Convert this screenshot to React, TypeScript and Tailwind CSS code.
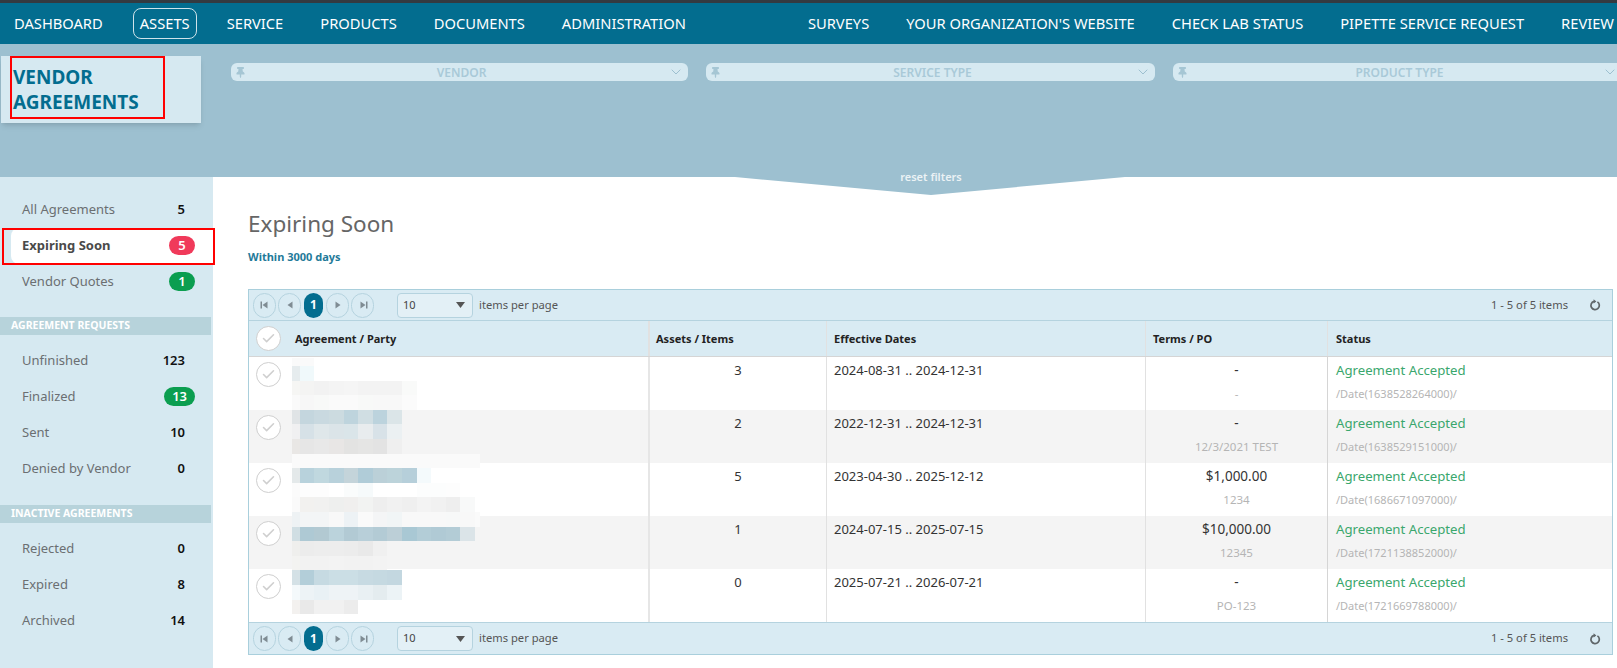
import { Check, ChevronDown } from "lucide-react";
import { FaThumbtack } from "react-icons/fa";

const navLeft = ["DASHBOARD", "ASSETS", "SERVICE", "PRODUCTS", "DOCUMENTS", "ADMINISTRATION"];
const navRight = ["SURVEYS", "YOUR ORGANIZATION'S WEBSITE", "CHECK LAB STATUS", "PIPETTE SERVICE REQUEST", "REVIEW"];

const rows = [
  { items: "3", from: "2024-08-31 .. 2024-12-31", terms: "-", po: "-", date: "/Date(1638528264000)/" },
  { items: "2", from: "2022-12-31 .. 2024-12-31", terms: "-", po: "12/3/2021 TEST", date: "/Date(1638529151000)/" },
  { items: "5", from: "2023-04-30 .. 2025-12-12", terms: "$1,000.00", po: "1234", date: "/Date(1686671097000)/" },
  { items: "1", from: "2024-07-15 .. 2025-07-15", terms: "$10,000.00", po: "12345", date: "/Date(1721138852000)/" },
  { items: "0", from: "2025-07-21 .. 2026-07-21", terms: "-", po: "PO-123", date: "/Date(1721669788000)/" },
];

// redacted names in the first column, one line per row of blocks
const mosaic: { y: number; c: string[] }[] = [
  { y: 0, c: ["fafafa", "fafafa"] },
  { y: 8, c: ["e6ecee", "f0f9fb"] },
  { y: 22.6, c: ["f6f6f4", "f4f4f3", "f2f2f2", "f4f4f4", "f5f5f5", "f3f3f3", "f3f3f3", "f3f3f3", "f9faf9"] },
  { y: 37.2, c: ["fafafa", "f7f7f7", "f8f9f8", "fafafa", "fafafa", "f8f9f8", "f8f8f8", "f8f8f8", "fbfbfb"] },
  { y: 51.8, c: ["e0e4e6", "c4d6de", "c9d9e0", "ccdbe0", "bed4dd", "d0dee3", "bcd3dd", "dbe5e8"] },
  { y: 66.4, c: ["f0f0f1", "d6e1e7", "dfe7ea", "dbe4e8", "dae5e9", "e8ecee", "d8e2e8", "ebf0f2"] },
  { y: 81, c: ["e9e7e5", "e6e6e6", "e8e8e8", "e8e6e5", "e3e3e2", "e5e5e4", "e3e3e3", "efefef"] },
  { y: 95.6, c: ["fafafa", "fafafa", "fafafa", "fafafa", "fafafa", "fafafa", "fafafa", "fafafa", "fafafa", "fafafa", "fafafa", "fafafa", "fafafa", "fafafa"] },
  { y: 110.2, c: ["e4e9ea", "b8d2dc", "c0d8df", "b8d1db", "c4d4da", "b0ccd8", "bbd0d8", "bcd3da", "b6cfda", "f4fafc"] },
  { y: 124.8, c: ["fbfbfb", "fdfdfd", "fdfdfd", "ffffff", "fafcfc", "f6fafb", "ffffff", "ffffff", "ffffff", "fcfdfd", "fcfdfd", "fdfdfd"] },
  { y: 139.4, c: ["fafafa", "f2f1ef", "f1f1f0", "eeefee", "f0efee", "f2f3f2", "eeeeee", "f1f1f1", "efefef", "f3f3f3", "f1f1f1", "eeeeee", "f8f9f9"] },
  { y: 154, c: ["eef2f4", "f3f5f6", "f3f5f6", "f8f8f8", "edf2f5", "fafafa", "f4f5f6", "f1f5f6", "f8f8f8", "f8f8f8", "f8f8f8", "f7f8f8", "f8f8f8", "fafafa"] },
  { y: 168.6, c: ["d0dee3", "aec9d4", "b2c9d2", "bbd3dc", "b2cad4", "b8cfd9", "b3cbd5", "bccfd7", "a9c8d4", "b3cdd7", "b0cad5", "b3ccd6", "dbe4e8"] },
  { y: 183.2, c: ["efefed", "ececec", "ededed", "ededed", "ececec", "e9e9e9", "f0f0f0"] },
  { y: 197.8, c: ["f3f3f1", "f2f2f2", "f2f2f2", "f3f3f3", "f2f2f2", "f2f2f2", "f3f3f3"] },
  { y: 212.4, c: ["d4e1e6", "b3ced9", "c6dae2", "cbdee5", "cbdee5", "c7dae2", "c5d9e1", "c3d7e0"] },
  { y: 227, c: ["f4f9fb", "edf3f6", "e9f1f5", "eef3f6", "eef3f6", "e9f0f3", "e4ecef", "ecf3f6"] },
  { y: 241.6, c: ["f3f1ef", "e9e9e9", "f1f1f1", "f1f1f1", "ececec"] },
];

function Mosaic() {
  return (
    <svg width="188" height="256" className="absolute left-[43px] top-[68px]" shapeRendering="crispEdges">
      {mosaic.map((line) =>
        line.c.map((fill, i) => (
          <rect
            key={`${line.y}-${i}`}
            x={i === 0 ? 0 : 7.7 + (i - 1) * 14.6}
            y={line.y}
            width={i === 0 ? 7.7 : 14.6}
            height={14.6}
            fill={`#${fill}`}
          />
        ))
      )}
    </svg>
  );
}

function SideRow(props: { label: string; count: string; badge?: "red" | "green"; active?: boolean }) {
  return (
    <div
      className={
        "relative flex h-[35.75px] items-center justify-between ml-[11px] pl-[11px] rounded-l-lg text-[13px] " +
        (props.active ? "bg-white font-bold text-[#4a4a4a]" : "text-[#6b6f72]")
      }
    >
      <span>{props.label}</span>
      {props.badge ? (
        <span
          className={
            "mr-[18px] flex h-[19px] min-w-[26px] items-center justify-center rounded-full px-2 text-[13px] font-semibold text-white " +
            (props.badge === "red" ? "bg-[#f03a5a]" : "bg-[#0b9e50]")
          }
        >
          {props.count}
        </span>
      ) : (
        <span className="mr-[28px] font-semibold text-[#111]">{props.count}</span>
      )}
      {props.active && <div className="absolute left-[-9px] right-[-2px] top-0 bottom-[-1px] border-2 border-[#f00]" />}
    </div>
  );
}

function SideHeader(props: { label: string; className: string }) {
  return (
    <div className={"flex h-[18px] w-[211px] items-center bg-[#b7d3db] pl-[11px] text-[10.5px] font-bold text-white " + props.className}>
      {props.label}
    </div>
  );
}

function FilterSelect(props: { label: string; className: string }) {
  return (
    <div className={"flex h-[18px] shrink-0 items-center justify-between rounded-md bg-[#d6e9f1] px-[4px] " + props.className}>
      <FaThumbtack size={11} className="text-[#a5c6d4]" />
      <span className="ml-[9px] mt-[2px] text-[12px] font-semibold text-[#a9c9d8]">{props.label}</span>
      <ChevronDown size={16} strokeWidth={1.5} className="text-[#9dc0d0]" />
    </div>
  );
}

function CheckCircle() {
  return (
    <div className="flex h-[25px] w-[25px] items-center justify-center rounded-full border border-[#cfcfcf] bg-white">
      <Check size={15} strokeWidth={2.5} className="text-[#cfcfcf]" />
    </div>
  );
}

function PageButton(props: { bar?: "left" | "right"; dir: "left" | "right" }) {
  return (
    <div className="flex h-[25px] w-[23px] items-center justify-center rounded-full border border-[#b5d3df]">
      <svg width="10" height="10" viewBox="0 0 10 10" className="fill-[#7f8c93]">
        {props.dir === "left" ? <path d="M7.5 1.5v7L2.5 5z" /> : <path d="M2.5 1.5v7L7.5 5z" />}
        {props.bar === "left" && <rect x="0.5" y="1.5" width="1.5" height="7" />}
        {props.bar === "right" && <rect x="8" y="1.5" width="1.5" height="7" />}
      </svg>
    </div>
  );
}

function RefreshIcon() {
  return (
    <svg width="12" height="12" viewBox="0 0 12 12" className="ml-[21px]">
      <path d="M8.4 2.9A4.2 4.2 0 1 1 5 2.4" fill="none" stroke="#5f6669" strokeWidth="1.7" />
      <path d="M4.6 0.2L7.4 2.4 4.6 4.6z" fill="#5f6669" />
    </svg>
  );
}

function Pager(props: { className: string }) {
  return (
    <div className={"flex items-center bg-[#d9ebf3] pl-1 pr-[11px] text-[11.2px] text-[#555] " + props.className}>
      <div className="flex items-center gap-[2px]">
        <PageButton dir="left" bar="left" />
        <PageButton dir="left" />
        <div className="mx-[1px] flex h-[25px] w-[19px] items-center justify-center rounded-full bg-[#036d8f] text-[12px] font-bold text-white">1</div>
        <PageButton dir="right" />
        <PageButton dir="right" bar="right" />
      </div>
      <div className="ml-[23px] flex h-[25px] w-[76px] items-center justify-between rounded border border-[#b5d3df] bg-[#e3f0f6] pl-[5px] pr-[7px] text-[11px] text-[#444]">
        <span>10</span>
        <svg width="9" height="6" viewBox="0 0 9 6" className="fill-[#555]"><path d="M0 0h9L4.5 6z" /></svg>
      </div>
      <span className="ml-[6px]">items per page</span>
      <span className="ml-auto">1 - 5 of 5 items</span>
      <RefreshIcon />
    </div>
  );
}

export default function App() {
  return (
    <div className="flex h-[668px] w-[1617px] flex-col overflow-hidden bg-white font-['Noto_Sans',sans-serif] text-[13px]">
      <div className="h-[3px] shrink-0 bg-[#343a40]" />

      <nav className="flex h-[41px] shrink-0 items-center justify-between overflow-hidden whitespace-nowrap bg-[#036d8f] pl-[14px] text-[14.7px] text-white">
        <div className="flex items-center gap-[37px]">
          {navLeft.map((n) => (
            <span key={n} className={n === "ASSETS" ? "-mx-[7px] rounded-lg border border-[#cfe3ea] px-[6px] py-[3px]" : ""}>{n}</span>
          ))}
        </div>
        <div className="flex shrink-0 items-center gap-[37px] pr-[3px]">
          {navRight.map((n) => (
            <span key={n}>{n}</span>
          ))}
        </div>
      </nav>

      <div className="relative z-10 flex h-[133px] shrink-0 bg-[#9dc0d0]">
        <div className="relative mt-[12px] ml-[1px] h-[67px] w-[200px] shrink-0 bg-[#d6e9f1] pl-[12px] pt-[9px] text-[19px] font-bold leading-[25px] text-[#036d8f] shadow-md">
          VENDOR<br />AGREEMENTS
          <div className="absolute left-[9px] top-0 h-[63px] w-[155px] border-2 border-[#f00]" />
        </div>
        <div className="ml-[30px] mt-[19px] flex items-start gap-[18px]">
          <FilterSelect label="VENDOR" className="w-[457px]" />
          <FilterSelect label="SERVICE TYPE" className="w-[449px]" />
          <FilterSelect label="PRODUCT TYPE" className="w-[449px]" />
        </div>
        <svg width="390" height="18" viewBox="0 0 390 18" className="absolute left-[735px] top-[133px] fill-[#9dc0d0]">
          <path d="M0 0H390L196 18z" />
        </svg>
        <span className="absolute left-[931px] top-[125px] -translate-x-1/2 text-[11px] font-semibold text-white opacity-80">reset filters</span>
      </div>

      <div className="flex min-h-0 flex-1">
        <aside className="w-[213px] shrink-0 bg-[#d6e9f1] pt-[15px]">
          <SideRow label="All Agreements" count="5" />
          <SideRow label="Expiring Soon" count="5" badge="red" active />
          <SideRow label="Vendor Quotes" count="1" badge="green" />
          <SideHeader label="AGREEMENT REQUESTS" className="mt-[18px] mb-[8px]" />
          <SideRow label="Unfinished" count="123" />
          <SideRow label="Finalized" count="13" badge="green" />
          <SideRow label="Sent" count="10" />
          <SideRow label="Denied by Vendor" count="0" />
          <SideHeader label="INACTIVE AGREEMENTS" className="mt-[19px] mb-[8px]" />
          <SideRow label="Rejected" count="0" />
          <SideRow label="Expired" count="8" />
          <SideRow label="Archived" count="14" />
        </aside>

        <main className="min-w-0 flex-1 pl-[35px] pr-[4px] pt-[29px]">
          <h1 className="h-[36px] text-[22.5px] leading-[36px] text-[#666]">Expiring Soon</h1>
          <p className="mt-[7px] h-[16px] text-[11px] font-bold leading-[16px] text-[#1f7a99]">Within 3000 days</p>

          <div className="relative mt-[24px] border border-[#a9cfdc]">
            <Pager className="h-[31px] border-b border-[#b5d3df]" />
            <div className="grid h-[36px] grid-cols-[401px_177px_319px_182px_1fr] items-center border-b border-[#d5d5d5] bg-[#d9ebf3] text-[11px] font-bold text-[#222]">
              <div className="flex h-full items-center border-r-2 border-[#e1e1e1] pl-[7px]">
                <CheckCircle />
                <span className="ml-[14px] pt-[2px]">Agreement / Party</span>
              </div>
              <div className="flex h-full items-center border-r border-[#e1e1e1] pl-[6px] pt-[2px]">Assets / Items</div>
              <div className="flex h-full items-center border-r border-[#e1e1e1] pl-[7px] pt-[2px]">Effective Dates</div>
              <div className="flex h-full items-center border-r border-[#e1e1e1] pl-[7px] pt-[2px]">Terms / PO</div>
              <div className="flex h-full items-center pl-[8px] pt-[2px]">Status</div>
            </div>
            {rows.map((r, i) => (
              <div key={r.date} className={"grid h-[53px] grid-cols-[401px_177px_319px_182px_1fr] " + (i % 2 === 1 ? "bg-[#f4f4f4]" : "bg-white")}>
                <div className="border-r-2 border-[#e6e6e6] pl-[7px] pt-[5px]">
                  <CheckCircle />
                </div>
                <div className="border-r border-[#e1e1e1] pt-[1px] text-center leading-[24px] text-[#333]">{r.items}</div>
                <div className="border-r border-[#e1e1e1] pl-[7px] pt-[1px] leading-[24px] text-[#333]">{r.from}</div>
                <div className="border-r border-[#d5d5d5] pt-[1px] text-center text-[#333]">
                  <div className="h-[24px] text-[13.5px] leading-[24px]">{r.terms}</div>
                  <div className="h-[24px] text-[11.5px] leading-[23px] text-[#b5b5b5]">{r.po}</div>
                </div>
                <div className="pl-[8px] pt-[1px]">
                  <div className="h-[24px] text-[13.2px] leading-[24px] text-[#3aa76d]">Agreement Accepted</div>
                  <div className="h-[24px] text-[11px] leading-[23px] text-[#b5b5b5]">{r.date}</div>
                </div>
              </div>
            ))}
            <Pager className="h-[32px] border-t border-[#b5d3df]" />
            <Mosaic />
          </div>
        </main>
      </div>
    </div>
  );
}
